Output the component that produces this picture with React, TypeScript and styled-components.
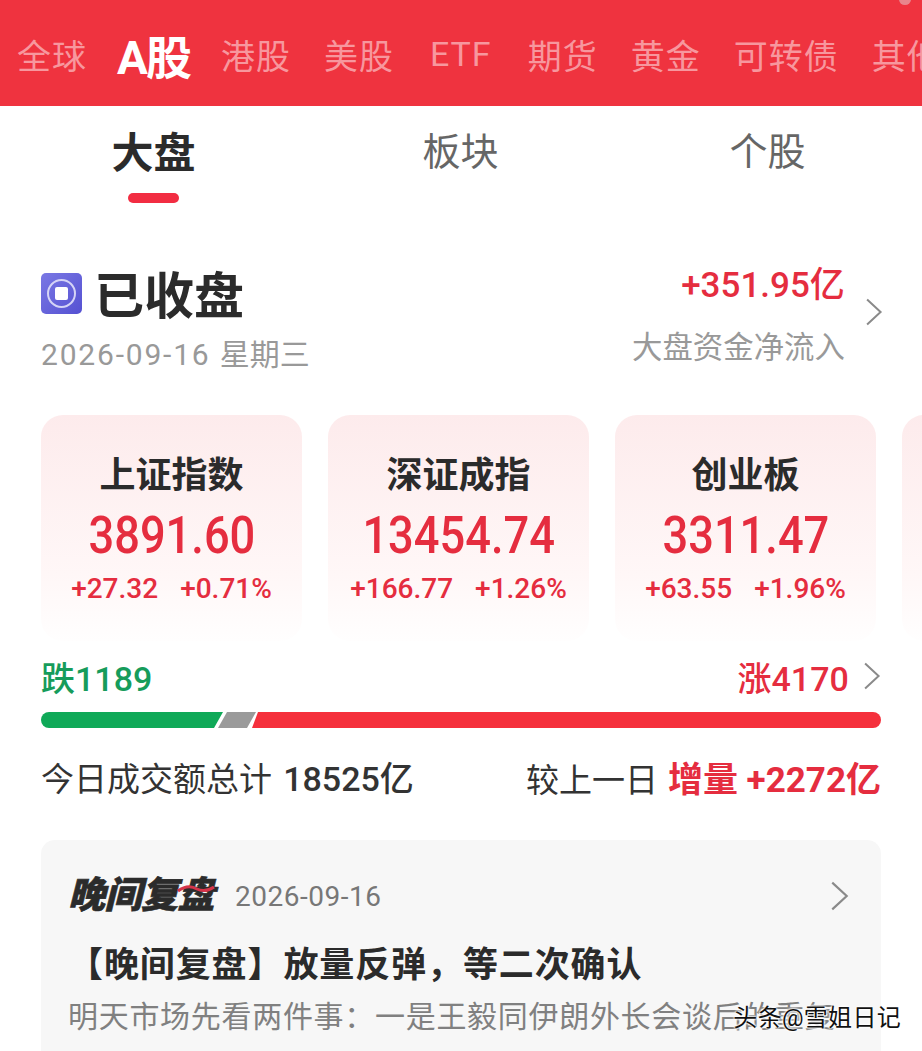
import styled, { createGlobalStyle } from 'styled-components'

const SANS = `Roboto, "Noto Sans CJK SC", sans-serif`
const RED = '#e52d3f'

const GlobalStyle = createGlobalStyle`
	html, body {
		margin: 0;
		padding: 0;
		background: #fff;
	}
	* {
		box-sizing: border-box;
	}
`

const Page = styled.div`
	position: relative;
	width: 922px;
	height: 1051px;
	overflow: hidden;
	background: #fff;
	font-family: ${SANS};
`

const MarketBar = styled.div`
	position: relative;
	display: flex;
	align-items: center;
	gap: 33px;
	height: 106px;
	padding: 2px 0 0 17px;
	background: #ef333f;
	white-space: nowrap;
	overflow: hidden;
`

const MarketItem = styled.div<{ $active?: boolean; $wide?: boolean }>`
	flex: none;
	font-size: ${p => (p.$active ? 46 : 34)}px;
	font-weight: ${p => (p.$active ? 700 : 400)};
	color: ${p => (p.$active ? '#fff' : '#f7979e')};
	letter-spacing: ${p => (p.$active ? -2 : 1)}px;
	margin: ${p => (p.$active ? '0 -2px 0 -3px' : p.$wide ? '0 3px' : '0')};
`

const NoticeDot = styled.div`
	position: absolute;
	top: -6px;
	right: 11px;
	width: 12px;
	height: 11px;
	border-radius: 50%;
	background: #e8858c;
`

const TabRow = styled.div`
	display: grid;
	grid-template-columns: repeat(3, 307px);
	padding-top: 20px;
`

const Tab = styled.div<{ $active?: boolean }>`
	display: flex;
	flex-direction: column;
	align-items: center;
	gap: 13px;
	height: 78px;
	padding-top: ${p => (p.$active ? 2 : 0)}px;
	font-size: ${p => (p.$active ? 42 : 38)}px;
	line-height: 52px;
	color: ${p => (p.$active ? '#2b2b2b' : '#666')};
	font-weight: ${p => (p.$active ? 700 : 400)};
`

const TabMark = styled.div`
	width: 51px;
	height: 10px;
	border-radius: 5px;
	background: #f22d42;
`

const Content = styled.div`
	padding: 0 41px;
`

const StatusRow = styled.div`
	display: flex;
	justify-content: space-between;
	align-items: flex-start;
	padding-top: 63px;
	height: 211px;
`

const StatusLeft = styled.div`
	display: flex;
	flex-direction: column;
	gap: 10px;
`

const StatusTitle = styled.div`
	display: flex;
	align-items: center;
	gap: 12px;
	font-size: 50px;
	line-height: 60px;
	font-weight: 700;
	color: #2b2b2b;
`

const StatusIcon = styled.div`
	display: flex;
	align-items: center;
	justify-content: center;
	width: 41px;
	height: 41px;
	margin-top: -8px;
	border-radius: 5px;
	background: linear-gradient(135deg, #7a78e4, #5551d2);
`

const IconRing = styled.div`
	display: flex;
	align-items: center;
	justify-content: center;
	width: 29px;
	height: 29px;
	border: 2px solid #d5d4f6;
	border-radius: 50%;
`

const IconSquare = styled.div`
	width: 13px;
	height: 13px;
	border-radius: 2px;
	background: #fff;
`

const StatusDate = styled.div`
	font-size: 30px;
	line-height: 36px;
	color: #999;
	letter-spacing: 1.8px;
`

const DateWeek = styled.span`
	letter-spacing: 0;
`

const FlowBlock = styled.div`
	display: flex;
	align-items: flex-start;
	gap: 20px;
	margin: -3px -2px 0 0;
`

const FlowText = styled.div`
	display: flex;
	flex-direction: column;
	align-items: flex-end;
	gap: 22px;
`

const FlowValue = styled.div`
	font-size: 35px;
	line-height: 44px;
	font-weight: 500;
	color: ${RED};
`

const FlowLabel = styled.div`
	font-size: 30.4px;
	line-height: 36px;
	color: #999;
`

const FlowArrow = styled.div`
	margin-top: 34px;
`

const CardRow = styled.div`
	display: flex;
	gap: 26px;
	margin-right: -41px;
	overflow: hidden;
`

const IndexCard = styled.div`
	flex: none;
	display: flex;
	flex-direction: column;
	align-items: center;
	width: 261px;
	height: 226px;
	padding-top: 38px;
	border-radius: 22px;
	background: linear-gradient(180deg, #fdebec 0%, #fff7f7 70%, #fffefe 100%);
`

const IndexName = styled.div`
	height: 46px;
	font-size: 36px;
	line-height: 46px;
	font-weight: 600;
	color: #2b2b2b;
`

const IndexValue = styled.div`
	height: 60px;
	font-size: 52px;
	line-height: 60px;
	font-weight: 500;
	color: ${RED};
	margin-top: 7px;
	transform: scaleX(0.87);
`

const IndexChange = styled.div`
	display: flex;
	gap: 22px;
	height: 36px;
	font-size: 28px;
	line-height: 36px;
	font-weight: 500;
	color: ${RED};
	margin-top: 5px;
`

const Breadth = styled.div`
	display: flex;
	justify-content: space-between;
	align-items: center;
	height: 40px;
	margin-top: 15px;
`

const BreadthValue = styled.div<{ $up?: boolean }>`
	display: flex;
	align-items: center;
	gap: 14px;
	font-size: 34px;
	font-weight: 500;
	color: ${p => (p.$up ? RED : '#169c5b')};
`

const Bar = styled.div`
	display: flex;
	height: 16px;
	margin-top: 16px;
`

const BarPart = styled.div<{ $color: string; $shape: string; $width?: number; $overlap?: number }>`
	flex: ${p => (p.$width ? `0 0 ${p.$width}px` : '1')};
	margin-left: ${p => -(p.$overlap ?? 0)}px;
	background: ${p => p.$color};
	clip-path: ${p => p.$shape};
	border-radius: ${p => (p.$width === 182 ? '8px 0 0 8px' : p.$width ? '0' : '0 8px 8px 0')};
`

const VolumeRow = styled.div`
	display: flex;
	justify-content: space-between;
	align-items: center;
	height: 44px;
	margin-top: 26px;
	font-size: 33px;
	color: #333;
`

const Strong = styled.span<{ $red?: boolean }>`
	font-weight: ${p => (p.$red ? 700 : 500)};
	color: ${p => (p.$red ? RED : '#333')};
	margin-left: ${p => (p.$red ? 10 : 3)}px;
	font-size: ${p => (p.$red ? 35 : 34)}px;
`

const ReviewCard = styled.div`
	margin-top: 42px;
	height: 300px;
	padding: 28px 32px 0 27px;
	border-radius: 14px 14px 0 0;
	background: #f7f7f7;
`

const ReviewHead = styled.div`
	display: flex;
	align-items: center;
	height: 56px;
`

const ReviewBrand = styled.div`
	position: relative;
	font-size: 37px;
	line-height: 50px;
	font-weight: 900;
	font-style: italic;
	color: #2b2b2b;
	letter-spacing: -0.5px;
	-webkit-text-stroke: 0.6px #2b2b2b;
`

const BrandStroke = styled.svg`
	position: absolute;
	right: -1px;
	top: 13px;
	width: 38px;
	height: 10px;
`

const ReviewDate = styled.div`
	flex: 1;
	margin-left: 21px;
	font-size: 28px;
	color: #777;
	letter-spacing: 0.5px;
`

const ReviewTitle = styled.div`
	margin-top: 21px;
	font-size: 35px;
	line-height: 42px;
	font-weight: 700;
	letter-spacing: 0.9px;
	color: #2b2b2b;
	white-space: nowrap;
`

const ReviewText = styled.div`
	margin-top: 10px;
	font-size: 30px;
	line-height: 40px;
	letter-spacing: 0.7px;
	color: #808080;
	white-space: nowrap;
`

const Watermark = styled.div`
	position: absolute;
	right: 21px;
	top: 1003px;
	font-size: 24px;
	letter-spacing: 0.3px;
	line-height: 30px;
	color: #111;
	text-shadow: 0 0 2px #fff, 0 0 2px #fff, 0 0 3px #fff, 0 0 3px #fff;
`

const Chevron = ({ size = 28 }: { size?: number }) => (
	<svg width={size * 0.65} height={size} viewBox="0 0 18 28" fill="none">
		<polyline points="2,1.5 15.5,14 2,26.5" stroke="#8a8a8a" strokeWidth="2" />
	</svg>
)

const markets = ['全球', 'A股', '港股', '美股', 'ETF', '期货', '黄金', '可转债', '其他']

const indices = [
	{ name: '上证指数', value: '3891.60', diff: '+27.32', pct: '+0.71%' },
	{ name: '深证成指', value: '13454.74', diff: '+166.77', pct: '+1.26%' },
	{ name: '创业板', value: '3311.47', diff: '+63.55', pct: '+1.96%' },
	{ name: '', value: '', diff: '', pct: '' }
]

const App = () => {
	return (
		<Page>
			<GlobalStyle />
			<MarketBar>
				{markets.map(m => (
					<MarketItem key={m} $active={m === 'A股'} $wide={m === 'ETF'}>
						{m}
					</MarketItem>
				))}
				<NoticeDot />
			</MarketBar>

			<TabRow>
				<Tab $active>
					大盘
					<TabMark />
				</Tab>
				<Tab>板块</Tab>
				<Tab>个股</Tab>
			</TabRow>

			<Content>
				<StatusRow>
					<StatusLeft>
						<StatusTitle>
							<StatusIcon>
								<IconRing>
									<IconSquare />
								</IconRing>
							</StatusIcon>
							已收盘
						</StatusTitle>
						<StatusDate>
							2026-09-16 <DateWeek>星期三</DateWeek>
						</StatusDate>
					</StatusLeft>
					<FlowBlock>
						<FlowText>
							<FlowValue>+351.95亿</FlowValue>
							<FlowLabel>大盘资金净流入</FlowLabel>
						</FlowText>
						<FlowArrow>
							<Chevron />
						</FlowArrow>
					</FlowBlock>
				</StatusRow>

				<CardRow>
					{indices.map((item, ind) => (
						<IndexCard key={ind}>
							<IndexName>{item.name}</IndexName>
							<IndexValue>{item.value}</IndexValue>
							<IndexChange>
								<span>{item.diff}</span>
								<span>{item.pct}</span>
							</IndexChange>
						</IndexCard>
					))}
				</CardRow>

				<Breadth>
					<BreadthValue>跌1189</BreadthValue>
					<BreadthValue $up>
						涨4170
						<Chevron />
					</BreadthValue>
				</Breadth>

				<Bar>
					<BarPart
						$color="#0fa958"
						$width={182}
						$shape="polygon(0 0, 100% 0, calc(100% - 9px) 100%, 0 100%)"
					/>
					<BarPart
						$color="#9a9a9a"
						$width={38}
						$overlap={5}
						$shape="polygon(9px 0, 100% 0, calc(100% - 9px) 100%, 0 100%)"
					/>
					<BarPart
						$color="#f5303c"
						$overlap={4}
						$shape="polygon(6px 0, 100% 0, 100% 100%, 0 100%)"
					/>
				</Bar>

				<VolumeRow>
					<div>
						今日成交额总计 <Strong>18525亿</Strong>
					</div>
					<div>
						较上一日<Strong $red>增量 +2272亿</Strong>
					</div>
				</VolumeRow>

				<ReviewCard>
					<ReviewHead>
						<ReviewBrand>
							晚间复盘
							<BrandStroke viewBox="0 0 38 10">
								<path d="M1 7 C9 1 15 2 20 5 C26 8 31 7 37 3" stroke="#d5344a" strokeWidth="3" fill="none" />
							</BrandStroke>
						</ReviewBrand>
						<ReviewDate>2026-09-16</ReviewDate>
						<Chevron size={30} />
					</ReviewHead>
					<ReviewTitle>【晚间复盘】放量反弹，等二次确认</ReviewTitle>
					<ReviewText>明天市场先看两件事：一是王毅同伊朗外长会谈后的重复</ReviewText>
				</ReviewCard>
			</Content>

			<Watermark>头条@雪姐日记</Watermark>
		</Page>
	)
}

export default App
